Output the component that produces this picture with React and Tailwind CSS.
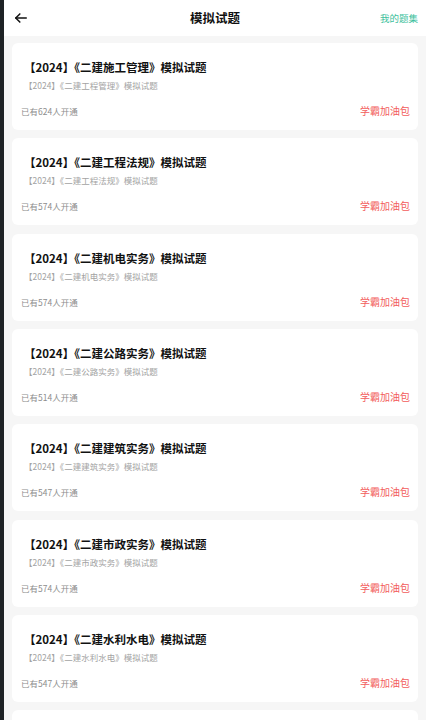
import React from "react";

const items = [
  { t: "二建施工管理", s: "二建工程管理", n: 624 },
  { t: "二建工程法规", s: "二建工程法规", n: 574 },
  { t: "二建机电实务", s: "二建机电实务", n: 574 },
  { t: "二建公路实务", s: "二建公路实务", n: 514 },
  { t: "二建建筑实务", s: "二建建筑实务", n: 547 },
  { t: "二建市政实务", s: "二建市政实务", n: 574 },
  { t: "二建水利水电", s: "二建水利水电", n: 547 },
];

export default function App() {
  return (
    <div
      className="w-[426px] h-[720px] overflow-hidden flex bg-[#f6f6f6]"
      style={{ fontFamily: '"Noto Sans CJK SC", "Noto Sans", sans-serif' }}
    >
      <div className="w-[4px] shrink-0 bg-[#1e2225]" />
      <div className="flex-1 flex flex-col min-w-0">
        <div className="h-[36px] shrink-0 bg-white flex items-center justify-between pl-[10px] pr-[8px] relative">
          <svg width="14" height="14" viewBox="0 0 24 24" fill="none" stroke="#111" strokeWidth="2.6" strokeLinecap="round" strokeLinejoin="round">
            <path d="M21 12H3" />
            <path d="M10 5l-7 7 7 7" />
          </svg>
          <div className="absolute left-0 right-0 text-center text-[12.5px] font-bold text-[#111] pointer-events-none">模拟试题</div>
          <div className="text-[9.5px] text-[#3dbf9c]">我的题集</div>
        </div>
        <div className="flex flex-col gap-[8.33px] pt-[7px] pl-[8px] pr-[8px]">
          {items.map((it, i) => (
            <div key={i} className="bg-white rounded-[6px] h-[87px] shrink-0 flex flex-col pl-[12px] pr-[8px] pt-[14px]">
              <div className="text-[11.5px] font-bold text-[#111] leading-[20px]">【2024】《{it.t}》模拟试题</div>
              <div className="text-[8.5px] text-[#a3a3a3] leading-[14px] mt-[1px]">【2024】《{it.s}》模拟试题</div>
              <div className="flex items-center justify-between mt-[11px]">
                <div className="text-[8.5px] text-[#8d8d8d] leading-[14px] -ml-[3px]">已有{it.n}人开通</div>
                <div className="text-[10px] text-[#f25c5c] leading-[16px]">学霸加油包</div>
              </div>
            </div>
          ))}
          <div className="bg-white rounded-[6px] h-[87px] shrink-0" />
        </div>
      </div>
    </div>
  );
}
